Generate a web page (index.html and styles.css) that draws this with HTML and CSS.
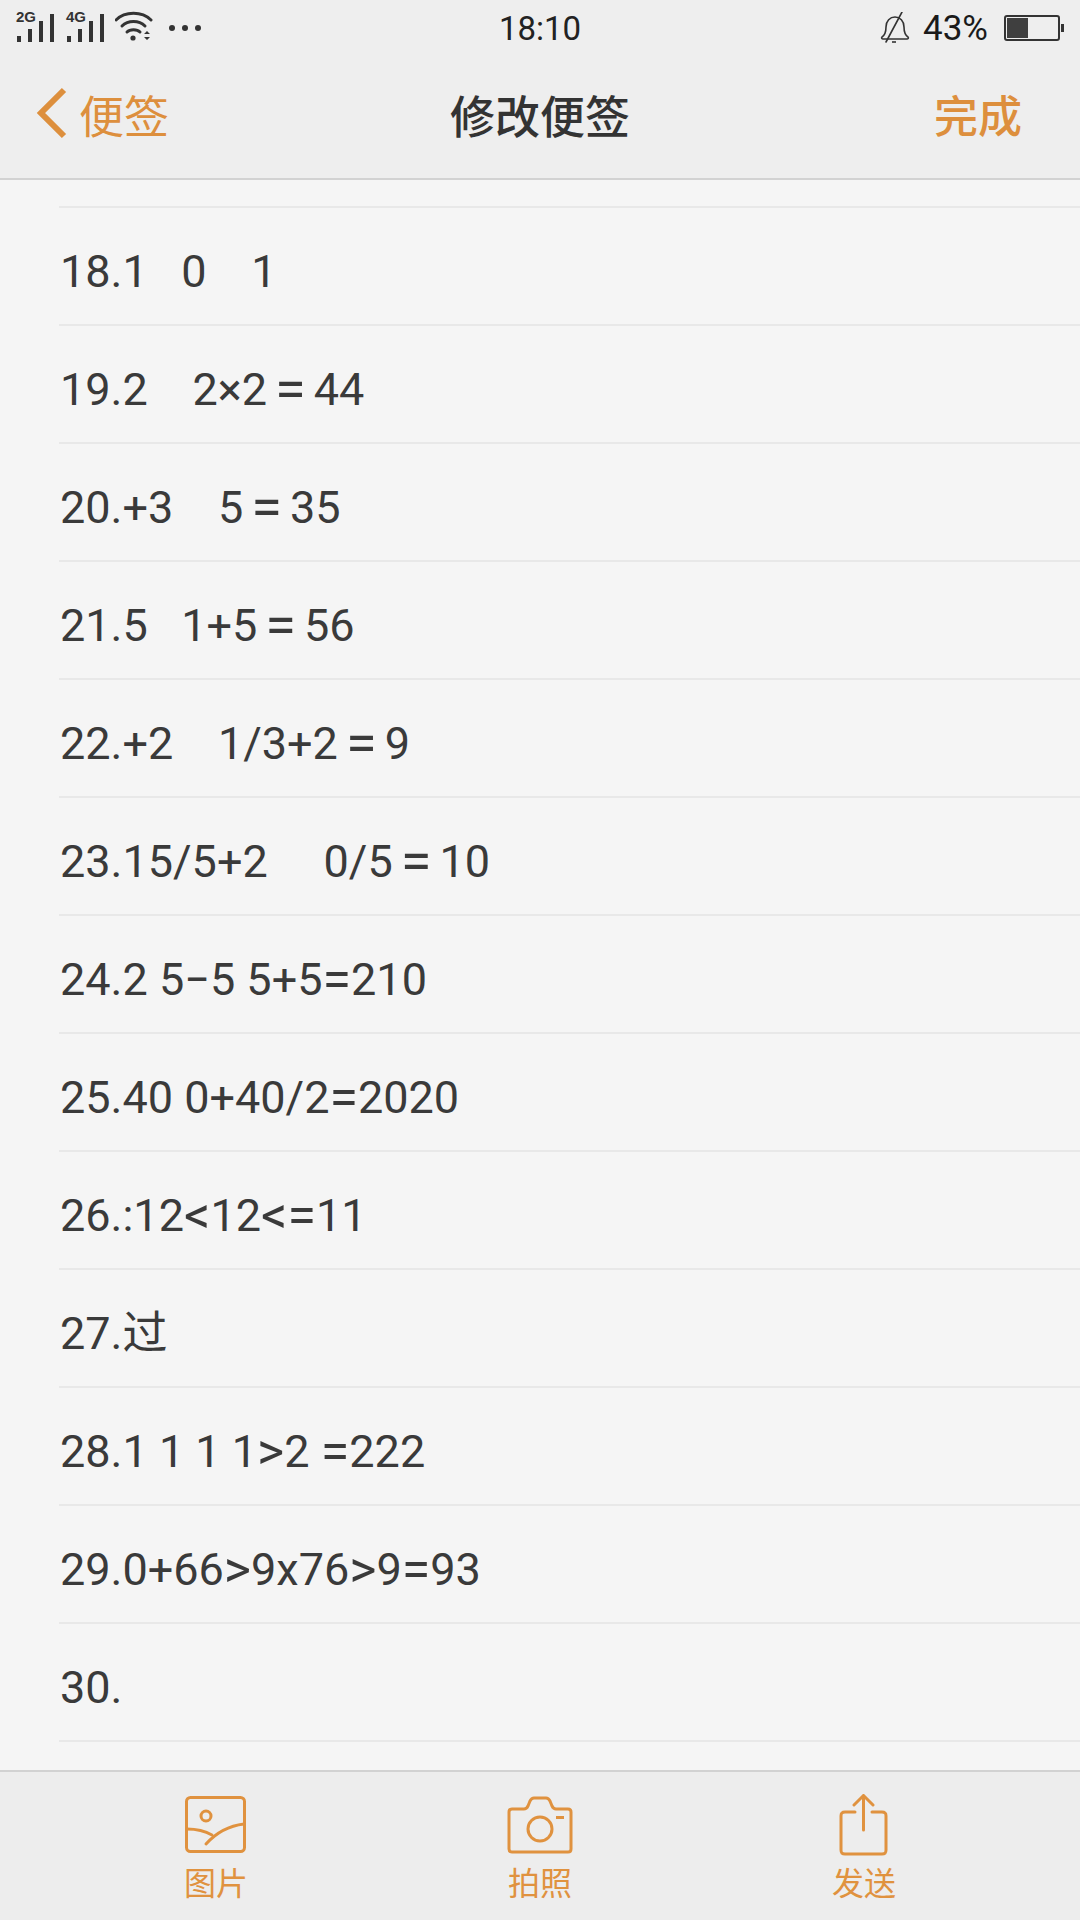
FILE: index.html
```html
<!DOCTYPE html>
<html lang="zh-CN">
<head>
    <meta charset="UTF-8">
    <meta name="viewport" content="width=device-width, initial-scale=1.0">
    <title>修改便签</title>
    <link rel="stylesheet" href="styles.css">
</head>
<body>

<div class="top">
    <!-- Status bar -->
    <div class="status">
        <div class="status-left">
            <div class="signal">
                <span class="signal-tag">2G</span>
                <svg width="38" height="28" viewBox="0 0 38 28"><g fill="#333"><rect x="1" y="22" width="4" height="6"/><rect x="12" y="15" width="4" height="13"/><rect x="23" y="7" width="4" height="21"/><rect x="34" y="0" width="4" height="28"/></g></svg>
            </div>
            <div class="signal">
                <span class="signal-tag">4G</span>
                <svg width="38" height="28" viewBox="0 0 38 28"><g fill="#333"><rect x="1" y="22" width="4" height="6"/><rect x="12" y="15" width="4" height="13"/><rect x="23" y="7" width="4" height="21"/><rect x="34" y="0" width="4" height="28"/></g></svg>
            </div>
            <svg class="wifi" width="38" height="30" viewBox="0 0 38 30">
                <g fill="none" stroke="#333" stroke-width="3" stroke-linecap="round">
                    <path d="M1 9C10 0 27 0 36 9"/>
                    <path d="M7 15C13 9 24 9 30 15"/>
                    <path d="M12 21C15 18 22 18 25 21"/>
                </g>
                <circle cx="18" cy="27" r="2.600" fill="#333"/>
                <path d="M29 23l3-3 3 3zM29 26h6l-3 3z" fill="#333"/>
            </svg>
            <div class="dots"><i></i><i></i><i></i></div>
        </div>
        <div class="clock">18:10</div>
        <div class="status-right">
            <svg width="30" height="32" viewBox="0 0 30 32">
                <g fill="none" stroke="#333" stroke-width="1.600" stroke-linecap="round" stroke-linejoin="round">
                    <path d="M2 25c3-2 4-5 4-10 0-6 4-10 9-10s9 4 9 10c0 5 1 8 4 10 1 1 0 2-1 2H3c-1 0-2-1-1-2z"/>
                    <path d="M22 0L6 30"/>
                </g>
                <path d="M12 30h4" stroke="#333" stroke-width="1.600"/>
            </svg>
            <span class="battery-text">43%</span>
            <div class="battery">
                <div class="battery-body"><div class="battery-fill"></div></div>
                <div class="battery-tip"></div>
            </div>
        </div>
    </div>

    <!-- Nav bar -->
    <div class="nav">
        <div class="nav-back">
            <svg width="32" height="54" viewBox="0 0 32 54"><path d="M28 3L5 26l23 23" fill="none" stroke="#dd8f3d" stroke-width="6"/></svg>
            <span>便签</span>
        </div>
        <div class="nav-title">修改便签</div>
        <div class="nav-done">完成</div>
    </div>
</div>

<!-- Note lines -->
<div class="note">
    <div class="note-cut"></div>
    <div class="line">18.1   0    1</div>
    <div class="line">19.2    2×2<span class="op eq">=</span>44</div>
    <div class="line">20.+3    5<span class="op eq">=</span>35</div>
    <div class="line">21.5   1+5<span class="op eq">=</span>56</div>
    <div class="line">22.+2    1/3+2<span class="op eq">=</span>9</div>
    <div class="line">23.15/5+2     0/5<span class="op eq">=</span>10</div>
    <div class="line">24.2 5−5 5+5<span class="op">=</span>210</div>
    <div class="line">25.40 0+40/2<span class="op">=</span>2020</div>
    <div class="line">26.:12<span class="op">&lt;</span>12<span class="op">&lt;=</span>11</div>
    <div class="line">27.过</div>
    <div class="line">28.1 1 1 1<span class="op">&gt;</span>2 <span class="op">=</span>222</div>
    <div class="line">29.0+66<span class="op">&gt;</span>9x76<span class="op">&gt;</span>9<span class="op">=</span>93</div>
    <div class="line">30.</div>
</div>

<!-- Bottom toolbar -->
<div class="toolbar">
    <div class="tool">
        <svg width="62" height="58" viewBox="0 0 62 58">
            <g fill="none" stroke="#e0923f" stroke-width="3" stroke-linecap="round">
                <rect x="1.500" y="1.500" width="58" height="54" rx="4"/>
                <circle cx="21" cy="20" r="5"/>
                <path d="M2 33c10 0 18 2 25 6"/>
                <path d="M21 48c9-10 21-18 38-20"/>
            </g>
        </svg>
        <span>图片</span>
    </div>
    <div class="tool">
        <svg width="66" height="58" viewBox="0 0 66 58">
            <g fill="none" stroke="#e0923f" stroke-width="3" stroke-linecap="round" stroke-linejoin="round">
                <path d="M5 13h12c2 0 3-1 4-3l2-5c1-2 2-3 4-3h12c2 0 3 1 4 3l2 5c1 2 2 3 4 3h12c2 0 3 1 3 3v37c0 2-1 3-3 3H5c-2 0-3-1-3-3V16c0-2 1-3 3-3z"/>
                <circle cx="33" cy="33" r="12"/>
            </g>
            <rect x="49" y="20" width="8" height="3" fill="#e0923f"/>
        </svg>
        <span>拍照</span>
    </div>
    <div class="tool">
        <svg width="50" height="62" viewBox="0 0 50 62">
            <g fill="none" stroke="#e0923f" stroke-width="3" stroke-linecap="round" stroke-linejoin="round">
                <path d="M16 18H6c-3 0-4 1-4 4v34c0 3 1 4 4 4h37c3 0 4-1 4-4V22c0-3-1-4-4-4H33"/>
                <path d="M24.500 36V2"/>
                <path d="M15 11l9.500-9.500L34 11"/>
            </g>
        </svg>
        <span>发送</span>
    </div>
</div>

</body>
</html>
```

FILE: styles.css
```css
* {
    box-sizing: border-box;
}
body {
    margin: 0;
    width: 1080px;
    height: 1920px;
    overflow: hidden;
    display: flex;
    flex-direction: column;
    background-color: #f5f5f5;
    font-family: Roboto, "Noto Sans CJK SC", sans-serif;
    color: #333;
}
.top {
    background-color: #eeeeee;
    border-bottom: 2px solid #d2d2d2;
    height: 180px;
}
.status {
    height: 55px;
    padding: 10px 16px 0 16px;
    display: grid;
    grid-template-columns: 1fr auto 1fr;
    align-items: start;
}
.status-left {
    display: flex;
    align-items: flex-end;
    height: 32px;
}
.signal {
    position: relative;
    width: 50px;
    height: 28px;
    display: flex;
    align-items: flex-end;
}
.signal-tag {
    position: absolute;
    left: 0;
    top: -5px;
    font-size: 15px;
    line-height: 15px;
    font-weight: 700;
    font-family: "Liberation Sans", sans-serif;
    color: #333;
}
.wifi {
    margin-left: -1px;
    margin-bottom: 1px;
}
.dots {
    display: flex;
    gap: 7px;
    margin-left: 16px;
    margin-bottom: 11px;
}
.dots i {
    width: 6px;
    height: 6px;
    border-radius: 50%;
    background-color: #333;
}
.clock {
    font-size: 33px;
    line-height: 38px;
    color: #222;
}
.status-right {
    display: flex;
    justify-content: flex-end;
    align-items: center;
    height: 32px;
    margin-top: 2px;
}
.battery-text {
    font-size: 35px;
    color: #1a1a1a;
    margin-left: 13px;
    margin-right: 16px;
}
.battery {
    display: flex;
    align-items: center;
}
.battery-body {
    width: 56px;
    height: 26px;
    border: 2px solid #333;
    border-radius: 3px;
    padding: 1px;
}
.battery-fill {
    width: 21px;
    height: 100%;
    background-color: #3f3f3f;
}
.battery-tip {
    width: 3px;
    height: 8px;
    margin-left: 1px;
    background-color: #333;
}
.nav {
    height: 123px;
    padding: 0 36px 5px 36px;
    display: grid;
    grid-template-columns: 1fr auto 1fr;
    align-items: center;
}
.nav-back {
    display: flex;
    align-items: center;
    font-size: 45px;
    color: #dd8f3d;
}
.nav-back span {
    margin-left: 11px;
}
.nav-title {
    font-size: 45px;
    font-weight: 500;
    color: #333;
}
.nav-done {
    justify-self: end;
    margin-right: 22px;
    font-size: 44px;
    font-weight: 500;
    color: #dd8f3d;
}
.note {
    flex: 1;
    margin-left: 59px;
    overflow: hidden;
}
.note-cut {
    height: 28px;
    border-bottom: 2px solid #e8e8e8;
}
.line {
    height: 118px;
    padding: 12px 0 0 1px;
    line-height: 104px;
    white-space: pre;
    font-size: 45px;
    color: #3a3a3a;
    border-bottom: 2px solid #e8e8e8;
}
/* symbols are a bit wider than the digits on this phone font */
.op {
    font-size: 52px;
    line-height: 1;
    vertical-align: -2px;
}
.eq {
    font-size: 56px;
    margin: 0 8px;
    vertical-align: -3px;
}
.toolbar {
    height: 150px;
    background-color: #ededed;
    border-top: 2px solid #d2d2d2;
    display: grid;
    grid-template-columns: 1fr 1fr 1fr;
    padding: 0 54px;
}
.tool {
    padding-top: 22px;
    display: flex;
    flex-direction: column;
    align-items: center;
    font-size: 32px;
    color: #e0923f;
}
.tool svg {
    height: 62px;
    margin-bottom: 2px;
}
```
